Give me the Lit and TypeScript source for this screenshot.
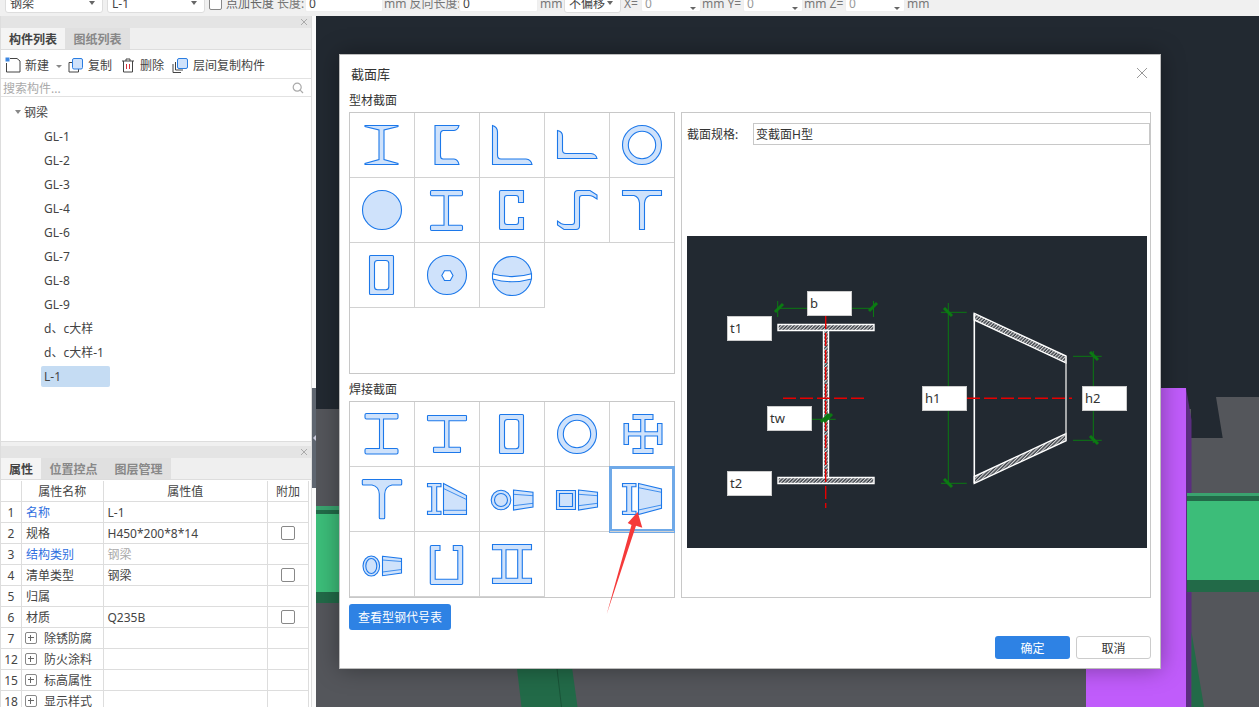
import { LitElement, html, css, svg } from "lit";
import { customElement } from "lit/decorators.js";

const roundI = (x0: number, x1: number, b0: number, b1: number, y0: number, y1: number, t: number, w0: number, w1: number, r = 1.5) =>
  `M${x0 + r} ${y0}H${x1 - r}Q${x1} ${y0} ${x1} ${y0 + r}V${y0 + t - r}Q${x1} ${y0 + t} ${x1 - r} ${y0 + t}H${w1}V${y1 - t}H${b1 - r}Q${b1} ${y1 - t} ${b1} ${y1 - t + r}V${y1 - r}Q${b1} ${y1} ${b1 - r} ${y1}H${b0 + r}Q${b0} ${y1} ${b0} ${y1 - r}V${y1 - t + r}Q${b0} ${y1 - t} ${b0 + r} ${y1 - t}H${w0}V${y0 + t}H${x0 + r}Q${x0} ${y0 + t} ${x0} ${y0 + t - r}V${y0 + r}Q${x0} ${y0} ${x0 + r} ${y0}Z`;

const roundRectPath = (x0: number, y0: number, x1: number, y1: number, r: number) =>
  `M${x0 + r} ${y0}H${x1 - r}Q${x1} ${y0} ${x1} ${y0 + r}V${y1 - r}Q${x1} ${y1} ${x1 - r} ${y1}H${x0 + r}Q${x0} ${y1} ${x0} ${y1 - r}V${y0 + r}Q${x0} ${y0} ${x0 + r} ${y0}Z`;

const taper = (x0: number, x1: number, lt: number, lb: number, rt: number, rb: number, it0: number, it1: number, ib0: number, ib1: number) => svg`
  <path d="M${x0} ${lt}L${x1} ${rt}V${rb}L${x0} ${lb}Z"/>
  <path class="ln" d="M${x0} ${it0}L${x1} ${it1}M${x0} ${ib0}L${x1} ${ib1}"/>`;

const smallI = (x0: number, x1: number, w0: number, w1: number, y0: number, y1: number, t: number) =>
  svg`<path d="M${x0} ${y0}H${x1}V${y0 + t}H${w1}V${y1 - t}H${x1}V${y1}H${x0}V${y1 - t}H${w0}V${y0 + t}H${x0}Z"/>`;

const sectionIcons = [
  svg`<path d="M16 13.5H49V14.5L35 18V47.5L49 51.5V52.5H16V51.5L30 47.5V18L16 14.5Z"/>`,
  svg`<path d="M21 13.5H45Q44 18 40 18.5H29Q26.5 19 26.5 22V44Q26.5 47 29 47H40Q44 47.5 45 52.5H21Z"/>`,
  svg`<path d="M13.5 13.5Q18.5 15 18.5 20V43Q18.5 47 22 47H47Q52 47.5 53 52.5H13.5Z"/>`,
  svg`<path d="M13.5 18.5Q18.5 19.5 18.5 24V38Q18.5 41.5 22 41.5H47Q52 42 53 46.5H13.5Z"/>`,
  svg`<path fill-rule="evenodd" d="M13.5 33a19.5 19.5 0 1 0 39 0a19.5 19.5 0 1 0 -39 0ZM19.3 33a13.7 13.7 0 1 1 27.4 0a13.7 13.7 0 1 1 -27.4 0Z"/>`,
  svg`<circle cx="33" cy="33" r="19.5"/>`,
  svg`<path d="${roundI(16.5, 48.5, 16.5, 48.5, 13.5, 53.5, 5.2, 30, 34.5, 1.2)}"/>`,
  svg`<path d="M21.8 13.5H44.5V25.5H39.5V21Q39.5 18.5 37 18.5H28Q25.5 18.5 25.5 21V45Q25.5 47.5 28 47.5H37Q39.5 47.5 39.5 45V40.5H44.5V52.5H21.8Q20.5 52.5 20.5 51.2V14.8Q20.5 13.5 21.8 13.5Z"/>`,
  svg`<path d="M30.5 17Q30.5 13.5 34 13.5H46L53 18V22L49 19.5Q47 18.5 45 18.5H38Q35.5 18.5 35.5 21V49Q35.5 52.5 32 52.5H20L13.5 48V44L17 46.5Q19 47.5 21 47.5H28Q30.5 47.5 30.5 45Z"/>`,
  svg`<path d="M13.5 13.5H52.5V18.5H41Q36 20 35.5 26V52.5H30.5V26Q30 20 25 18.5H13.5Z"/>`,
  svg`<path fill-rule="evenodd" d="${roundRectPath(20.5, 13.5, 44.5, 52.5, 1)}${roundRectPath(25.5, 18.5, 39.8, 47.7, 3)}"/>`,
  svg`<circle cx="33" cy="33" r="19.5"/><path class="hole" d="M27.8 33.5L30.5 28.8H36.3L39 33.5L36.3 38.5H30.5Z"/>`,
  svg`<circle cx="33" cy="34" r="19.5"/><path class="hole" d="M13.5 31.7Q33 37.5 52.5 31.7V37Q33 42.5 13.5 37Z"/>`,
];

const weldedIcons = [
  svg`<path d="${roundI(16, 49, 16, 49, 12.5, 53, 5.5, 30.5, 34.5)}"/>`,
  svg`<path d="${roundI(13.5, 52.5, 19.5, 46.5, 14.5, 51.5, 5.2, 30.5, 35, 0.6)}"/>`,
  svg`<path fill-rule="evenodd" d="${roundRectPath(20.5, 13.5, 44.5, 52.5, 1)}${roundRectPath(25.5, 18.5, 39.8, 47.7, 3)}"/>`,
  svg`<path fill-rule="evenodd" d="M13.5 33a19.5 19.5 0 1 0 39 0a19.5 19.5 0 1 0 -39 0ZM19.3 33a13.7 13.7 0 1 1 27.4 0a13.7 13.7 0 1 1 -27.4 0Z"/>`,
  svg`<path d="M24 13.5H44V18.5H36V30.8H48.5V22.5H53V43.5H48.5V35H36V47.5H44V52.5H24V47.5H31.7V35H19.5V43.5H15V22.5H19.5V30.8H31.7V18.5H24Z"/>`,
  svg`<path d="M14.3 13.5H51.7Q52.7 13.5 52.7 14.5V18Q52.7 19 51.7 19H43Q36 20.5 35.7 28V51.7Q35.7 52.7 34.7 52.7H31.3Q30.3 52.7 30.3 51.7V28Q30 20.5 23 19H14.3Q13.3 19 13.3 18V14.5Q13.3 13.5 14.3 13.5Z"/>`,
  svg`${smallI(13.5, 27, 17.7, 22.7, 17.5, 48.5, 3.3)}${taper(29.5, 52.5, 17.5, 48.5, 29.5, 48.5, 22.5, 33.5, 44.3, 44.3)}`,
  svg`<circle cx="22" cy="34" r="9.8"/><circle cx="22" cy="34" r="6.5"/>${taper(34.5, 54, 24, 44, 26.3, 41, 28.3, 29.7, 39.7, 37.3)}`,
  svg`<path d="M12.5 24.5H31.5V43.5H12.5Z"/><path d="M15.5 27.5H28.5V40.5H15.5Z"/>${taper(34.5, 53.5, 24, 44, 26.3, 41, 28.3, 29.7, 39.7, 37.3)}`,
  svg`${smallI(13.5, 27, 17.7, 22.7, 17.5, 48.5, 3.3)}${taper(29.5, 52.5, 17.5, 48.5, 23, 42.3, 21.7, 26.3, 44, 39)}`,
  svg`<ellipse cx="22.3" cy="35" rx="8.3" ry="10"/><ellipse cx="22.3" cy="35" rx="5.5" ry="7.5"/>${taper(33.5, 52.5, 25.3, 44.7, 27.5, 42, 29, 30.5, 41, 38.5)}`,
  svg`<path d="M17.5 14.5H26V19.5H21.2V48.3H43.8V19.5H39.3V14.5H47.5Q48.7 14.5 48.7 15.7V52.3Q48.7 53.5 47.5 53.5H17.5Q16.3 53.5 16.3 52.3V15.7Q16.3 14.5 17.5 14.5Z"/>`,
  svg`<path d="M13.5 13.5H52.5V18.7H43.3V47.3H52.5V52.5H13.5V47.3H22.7V18.7H13.5ZM27 18.7V47.3H38.7V18.7Z" fill-rule="evenodd"/>`,
];

const treeItems = ["GL-1", "GL-2", "GL-3", "GL-4", "GL-6", "GL-7", "GL-8", "GL-9", "d、c大样", "d、c大样-1", "L-1"];

const props: { n: string; name: string; val?: string; blue?: boolean; grey?: boolean; check?: boolean; plus?: boolean }[] = [
  { n: "1", name: "名称", val: "L-1", blue: true },
  { n: "2", name: "规格", val: "H450*200*8*14", check: true },
  { n: "3", name: "结构类别", val: "钢梁", blue: true, grey: true },
  { n: "4", name: "清单类型", val: "钢梁", check: true },
  { n: "5", name: "归属" },
  { n: "6", name: "材质", val: "Q235B", check: true },
  { n: "7", name: "除锈防腐", plus: true },
  { n: "12", name: "防火涂料", plus: true },
  { n: "15", name: "标高属性", plus: true },
  { n: "18", name: "显示样式", plus: true },
];

const labels = [
  { t: "b", x: 120, y: 55 },
  { t: "t1", x: 40, y: 80 },
  { t: "tw", x: 80, y: 170 },
  { t: "t2", x: 40, y: 235 },
  { t: "h1", x: 235, y: 150 },
  { t: "h2", x: 395, y: 150 },
];

const tick = (x: number, y: number, up = true) =>
  svg`<path class="tick" d="${up ? `M${x - 4} ${y + 4}L${x + 4} ${y - 4}` : `M${x - 4} ${y - 4}L${x + 4} ${y + 4}`}"/>`;

@customElement("app-root")
export class AppRoot extends LitElement {
  static styles = css`
    :host {
      display: grid;
      grid-template-columns: 312px 4px 1fr;
      grid-template-rows: 16px 1fr;
      width: 1259px;
      height: 707px;
      overflow: hidden;
      background: #f0f0f0;
      font: 12px "Noto Sans", "Noto Sans CJK SC", sans-serif;
      color: #444;
    }
    * { box-sizing: border-box; }

    .topbar { grid-column: 1 / 4; height: 16px; overflow: hidden; background: #f0f0f0; }
    .toprow { display: flex; align-items: center; height: 26px; margin-top: -10px; padding-left: 5px; color: #777; white-space: nowrap; }
    .sel { height: 20px; background: #fff; border: 1px solid #ddd; border-radius: 3px; display: flex; align-items: center; justify-content: space-between; padding: 0 7px 0 4px; color: #444; flex: none; }
    .sel::after { content: ""; border: 3px solid transparent; border-top: 4px solid #666; border-bottom: 0; }
    .s98 { width: 98px; margin-right: 4px; }
    .s57 { width: 57px; }
    .cb { width: 13px; height: 13px; background: #fff; border: 1px solid #888; border-radius: 2px; flex: none; margin-right: 4px; }
    .lab1 { width: 51px; color: #666; }
    .lab2 { width: 28px; }
    .lab3 { width: 75px; }
    .lab4 { width: 24px; margin: 0 0 0 2px; }
    .lab5 { width: 17px; margin-left: 3px; }
    .lab6 { width: 41px; margin-left: 1px; }
    .inp { height: 18px; background: #fff; border: 1px solid #eee; border-radius: 2px; padding: 0 3px; color: #444; display: flex; align-items: center; flex: none; position: relative; }
    .w78 { width: 78px; margin-right: 1px; }
    .w79 { width: 79px; }
    .num { width: 60px; color: #999; }
    .num::after { content: ""; position: absolute; right: 4px; top: 12px; border: 3px solid transparent; border-top: 3px solid #666; border-bottom: 0; }

    .side { display: flex; flex-direction: column; height: 691px; overflow: hidden; background: #f0f0f0; border-left: 1px solid #ddd; border-right: 1px solid #ddd; }
    .phead { height: 12px; background: #e4e4e4; flex: none; display: flex; justify-content: flex-end; align-items: center; padding-right: 2px; }
    .phead svg { display: block; }
    .tabs { height: 22px; display: flex; flex: none; background: #efefef; border-bottom: 1px solid #ddd; }
    .tab { display: flex; align-items: center; justify-content: center; background: #e0e0e0; color: #888; font-weight: 700; }
    .tab.on { background: #f4f4f4; color: #444; }
    .t64 { width: 64px; }
    .t65 { width: 65px; }
    .t40 { width: 40px; }
    .tools { height: 29px; flex: none; background: #fff; border-bottom: 1px solid #e2e2e2; display: flex; align-items: center; padding: 2px 0 0 4px; color: #444; }
    .tool { display: flex; align-items: center; gap: 5px; }
    .tool svg { display: block; flex: none; }
    .tool.i-new { gap: 4px; }
    .caret { border: 3px solid transparent; border-top: 3px solid #888; border-bottom: 0; margin: 2px 6px 0 7px; }
    .t-copy { margin-right: 9px; }
    .t-del { margin-right: 8px; }
    .search { height: 18px; flex: none; background: #fff; border-bottom: 1px solid #e2e2e2; display: flex; align-items: center; justify-content: space-between; padding: 0 7px 0 2px; color: #aaa; }
    .tree { height: 345px; flex: none; background: #fff; padding-top: 3px; border-bottom: 1px solid #ddd; color: #444; margin-bottom: 4px; }
    .root { height: 24px; display: flex; align-items: center; padding-left: 14px; gap: 3px; }
    .root::before { content: ""; border: 3px solid transparent; border-top: 4px solid #888; border-bottom: 0; }
    .leaf { height: 24px; display: flex; align-items: center; padding-left: 40px; }
    .leaf span { height: 21px; line-height: 21px; padding: 0 3px; }
    .leaf.on span { width: 69px; background: #c5dcf3; border-radius: 2px; }

    .table { background: #fff; flex: 1; padding-top: 1px; display: grid; grid-template-columns: 21px 81.5px 164.5px 41px 1fr; grid-auto-rows: 21px; align-content: start; }
    .c { border-right: 1px solid #ddd; border-bottom: 1px solid #ddd; display: flex; align-items: center; padding-left: 4px; min-width: 0; white-space: nowrap; }
    .c.ctr { justify-content: center; padding: 0; }
    .c.end { border: 0; }
    .c.blue { color: #2f6fe0; }
    .c.grey { color: #aaa; }
    .plus { width: 12px; height: 12px; border: 1px solid #888; border-radius: 2px; margin: 0 7px 0 -1px; position: relative; flex: none; }
    .plus::before { content: ""; position: absolute; left: 2px; right: 2px; top: 4px; height: 1px; background: #666; }
    .plus::after { content: ""; position: absolute; top: 2px; bottom: 2px; left: 4px; width: 1px; background: #666; }
    .chk { width: 14px; height: 14px; border: 1px solid #888; border-radius: 2px; background: #fff; }

    .gutter { background: #fbfbfb; height: 691px; overflow: hidden; }
    .grip { margin-top: 372px; height: 100px; background: #5f6670; display: flex; align-items: center; justify-content: center; }
    .grip::before { content: ""; border: 3px solid transparent; border-right: 3px solid #ccd; border-left: 0; }

    .canvas { position: relative; height: 691px; overflow: hidden; background: #222931; }
    .scene { position: absolute; inset: 0; display: block; }

    .dialog { position: absolute; left: 23px; top: 38px; width: 822px; height: 615px; background: #fff; border: 1px solid #bdbdbd; box-shadow: 0 0 22px rgba(0, 0, 0, 0.35); padding: 0 9px 0 9px; display: flex; flex-direction: column; color: #333; }
    .dtitle { height: 38px; flex: none; display: flex; align-items: center; justify-content: space-between; padding: 0 3px 2px 2px; font-size: 13px; }
    .dtitle svg { display: block; }
    .body { display: flex; gap: 6px; flex: none; }
    .lcol { width: 326px; flex: none; }
    .slabel { height: 14px; line-height: 16px; margin-bottom: 5px; }
    .slabel.second { margin-top: 8px; }
    .gridbox { width: 326px; border: 1px solid #c8c8c8; display: grid; grid-template-columns: repeat(4, 65px) 64px; grid-auto-rows: 65px; align-content: start; }
    .gb1 { height: 262px; }
    .gb2 { height: 197px; }
    .cell { border-right: 1px solid #d2d2d2; border-bottom: 1px solid #d2d2d2; }
    .cell:nth-child(5n) { border-right: 0; }
    .cell.sel-cell { box-shadow: inset 0 0 0 2px #6fa9e8, 0 0 0 1px #6fa9e8; position: relative; }
    .cell svg { display: block; }
    .ico path, .ico circle, .ico ellipse { fill: #cfe2fb; stroke: #1c78ea; stroke-width: 1.1; }
    .ico .ln { fill: none; stroke-width: 0.8; }
    .ico .hole { fill: #fff; }
    .primary { background: #2e82e4; color: #fff; border-radius: 3px; display: flex; align-items: center; justify-content: center; }
    .codes { width: 102px; height: 26px; margin-top: 6px; }
    .rpanel { width: 470px; height: 486px; margin-top: 19px; border: 1px solid #c8c8c8; padding: 10px 0 0 5px; flex: none; }
    .spec { display: flex; align-items: center; height: 22px; }
    .spec-l { width: 66px; color: #333; }
    .spec-i { width: 397px; height: 22px; border: 1px solid #c8c8c8; display: flex; align-items: center; padding-left: 2px; color: #333; }
    .drawing { position: relative; width: 460px; height: 312px; margin-top: 91px; background: #222931; }
    .drawing svg { position: absolute; inset: 0; display: block; }
    .dlabel { position: absolute; width: 45px; height: 25px; background: #fff; border: 1px solid #ccc; font-size: 13px; line-height: 23px; padding-left: 2px; color: #333; }
    .tick { stroke: #0b7a12; stroke-width: 3; fill: none; }
    .dim { stroke: #0b7a12; stroke-width: 1; fill: none; }
    .cl { stroke: #e60000; stroke-width: 1.4; stroke-dasharray: 13 4; fill: none; }
    .out { stroke: #fff; stroke-width: 1.4; fill: url(#hatch); }
    .footer { display: flex; justify-content: flex-end; gap: 6px; margin-top: 6px; }
    .btn { width: 75px; height: 23px; }
    .cancel { border: 1px solid #ccc; border-radius: 3px; display: flex; align-items: center; justify-content: center; color: #333; background: #fff; }
    .arrow { position: absolute; inset: 0; display: block; pointer-events: none; }
  `;

  private panelClose() {
    return html`<svg width="10" height="10" viewBox="0 0 10 10"><path d="M2 2L8 8M8 2L2 8" stroke="#aaa" fill="none"/></svg>`;
  }

  private cells(list: unknown[], selected = -1) {
    return list.map(
      (ic, i) => html`<div class="cell ${i === selected ? "sel-cell" : ""}">
        <svg class="ico" width="64" height="64" viewBox="1 1 64 64">${ic}</svg>
      </div>`
    );
  }

  render() {
    return html`
      <div class="topbar">
        <div class="toprow">
          <div class="sel s98">钢梁</div>
          <div class="sel s98">L-1</div>
          <div class="cb"></div>
          <div class="lab1">点加长度</div>
          <div class="lab2">长度:</div>
          <div class="inp w78">0</div>
          <div class="lab3">mm 反向长度:</div>
          <div class="inp w79">0</div>
          <div class="lab4">mm</div>
          <div class="sel s57">不偏移</div>
          <div class="lab5">X=</div>
          <div class="inp num">0</div>
          <div class="lab6">mm Y=</div>
          <div class="inp num">0</div>
          <div class="lab6">mm Z=</div>
          <div class="inp num">0</div>
          <div class="lab4">mm</div>
        </div>
      </div>

      <div class="side">
        <div class="phead">${this.panelClose()}</div>
        <div class="tabs">
          <div class="tab on t64">构件列表</div>
          <div class="tab t65">图纸列表</div>
        </div>
        <div class="tools">
          <div class="tool i-new">
            <svg width="16" height="16" viewBox="0 0 16 16">
              <path d="M1.5 6V15H15V4L12 1.5H5" stroke="#444" fill="none"/>
              <rect x="0.5" y="0.5" width="4" height="4" fill="#3c86e0"/>
            </svg>
            新建
          </div>
          <div class="caret"></div>
          <div class="tool t-copy">
            <svg width="15" height="15" viewBox="0 0 15 15">
              <path d="M4 4.5H1V14H10.5V11" stroke="#444" fill="none"/>
              <rect x="4.5" y="0.5" width="10" height="10.5" rx="1.5" fill="#cfe2fb" stroke="#2a7de1"/>
            </svg>
            复制
          </div>
          <div class="tool t-del">
            <svg width="14" height="15" viewBox="0 0 14 15">
              <path d="M1 3H13M5 3V1H9V3M2.5 3V14H11.5V3" stroke="#444" fill="none"/>
              <path d="M5.5 6V11M8.5 6V11" stroke="#d8323c" fill="none"/>
            </svg>
            删除
          </div>
          <div class="tool">
            <svg width="16" height="15" viewBox="0 0 16 15">
              <path d="M1 6V14.5H9M3.5 4V12H11" stroke="#444" fill="none"/>
              <rect x="5.5" y="0.5" width="10" height="10" rx="1.5" fill="#cfe2fb" stroke="#2a7de1"/>
            </svg>
            层间复制构件
          </div>
        </div>
        <div class="search">
          搜索构件...
          <svg width="12" height="12" viewBox="0 0 12 12">
            <circle cx="5.2" cy="5.2" r="4" stroke="#aaa" fill="none" stroke-width="1.2"/>
            <path d="M8.2 8.2L11 11" stroke="#aaa" stroke-width="1.2"/>
          </svg>
        </div>
        <div class="tree">
          <div class="root">钢梁</div>
          ${treeItems.map((t, i) => html`<div class="leaf ${i === treeItems.length - 1 ? "on" : ""}"><span>${t}</span></div>`)}
        </div>
        <div class="phead">${this.panelClose()}</div>
        <div class="tabs">
          <div class="tab on t40">属性</div>
          <div class="tab t65">位置控点</div>
          <div class="tab t65">图层管理</div>
        </div>
        <div class="table">
          <div class="c"></div>
          <div class="c ctr">属性名称</div>
          <div class="c ctr">属性值</div>
          <div class="c ctr">附加</div>
          <div class="c end"></div>
          ${props.map(
            (p) => html`
              <div class="c ctr">${p.n}</div>
              <div class="c ${p.blue ? "blue" : ""}">${p.plus ? html`<span class="plus"></span>` : ""}${p.name}</div>
              <div class="c ${p.grey ? "grey" : ""}">${p.val ?? ""}</div>
              <div class="c ctr">${p.check ? html`<div class="chk"></div>` : ""}</div>
              <div class="c end"></div>
            `
          )}
        </div>
      </div>

      <div class="gutter"><div class="grip"></div></div>

      <div class="canvas">
        <svg class="scene" width="943" height="691" viewBox="316 16 943 691">
          <path fill="#54565b" d="M316 409H1191V707H316Z"/>
          <path fill="#54565b" d="M1216 397H1259V707H1191V438H1222.7Z"/>
          <path fill="#c05cfb" d="M1086 388H1186V707H1086Z"/>
          <path fill="#5b2d80" d="M1186 388L1191.5 420V707H1186Z"/>
          <path fill="#226a48" d="M1191.5 632L1204 707H1191.5Z"/>
          <path fill="#226a48" d="M516 660H571L577.5 707H521.5Z"/>
          <path stroke="#1a5438" fill="none" d="M556 660L561.5 707"/>
          <path fill="#3aa36f" d="M316 506H339V510H316ZM1187 493H1259V496H1187Z"/>
          <path fill="#226a48" d="M316 510H339V514H316ZM316 592H339V603H316ZM1187 496H1259V501H1187ZM1187 580H1259V592H1187Z"/>
          <path fill="#3cbd79" d="M316 514H339V592H316ZM1187 501H1259V580H1187Z"/>
        </svg>

        <div class="dialog">
          <div class="dtitle">
            截面库
            <svg width="12" height="12" viewBox="0 0 12 12"><path d="M1 1L11 11M11 1L1 11" stroke="#999" fill="none"/></svg>
          </div>
          <div class="body">
            <div class="lcol">
              <div class="slabel">型材截面</div>
              <div class="gridbox gb1">${this.cells(sectionIcons)}</div>
              <div class="slabel second">焊接截面</div>
              <div class="gridbox gb2">${this.cells(weldedIcons, 9)}</div>
              <div class="primary codes">查看型钢代号表</div>
            </div>
            <div class="rpanel">
              <div class="spec">
                <div class="spec-l">截面规格:</div>
                <div class="spec-i">变截面H型</div>
              </div>
              <div class="drawing">
                <svg width="460" height="312" viewBox="687 236 460 312">
                  <defs>
                    <pattern id="hatch" patternUnits="userSpaceOnUse" width="2.5" height="2.5" patternTransform="rotate(45)">
                      <rect width="2.5" height="2.5" fill="#3a3f46"/>
                      <rect width="1.1" height="2.5" fill="#d8d8d8"/>
                    </pattern>
                  </defs>
                  <path class="out" d="M778 324.5H874V330.5H778Z"/>
                  <path class="out" d="M778 477.5H874V483.5H778Z"/>
                  <path class="out" d="M823.5 330.5H828.5V477.5H823.5Z"/>
                  <path class="cl" d="M825.7 316V508"/>
                  <path class="cl" d="M783 398.3H868"/>
                  <path class="dim" d="M778 308.3H873.5M777.7 301V317M873.5 301V317M812 419.3H835.7"/>
                  ${tick(779, 308)}${tick(873, 307)}${tick(825, 418)}${tick(828, 418)}
                  <path class="out" d="M974.3 313.3L1066 356V363L974.3 320Z"/>
                  <path class="out" d="M974.3 476.5L1066 433.5V440.7L974.3 483.3Z"/>
                  <path d="M974.3 313.3V483.3" stroke="#fff" stroke-width="1.6" fill="none"/>
                  <path d="M1066 356V440.7" stroke="#ddd" stroke-width="1.4" fill="none"/>
                  <path class="cl" d="M967 398.3H1072"/>
                  <path class="dim" d="M948.3 303V485M941 312.3H966.7M941 483.3H966.7M1093.3 351V443M1073 356.3H1101.7M1073 440.3H1101.7"/>
                  ${tick(948, 312, false)}${tick(948, 483, false)}${tick(1094, 356, false)}${tick(1094, 440, false)}
                </svg>
                ${labels.map((l) => html`<div class="dlabel" style="left:${l.x}px;top:${l.y}px">${l.t}</div>`)}
              </div>
            </div>
          </div>
          <div class="footer">
            <div class="primary btn">确定</div>
            <div class="cancel btn">取消</div>
          </div>
        </div>

        <svg class="arrow" width="943" height="691" viewBox="316 16 943 691">
          <path fill="#f53a3a" d="M606.7 614.3L631.5 525L627.7 523L637.7 512L642.3 527.7L636 525.7Z"/>
        </svg>
      </div>
    `;
  }
}
